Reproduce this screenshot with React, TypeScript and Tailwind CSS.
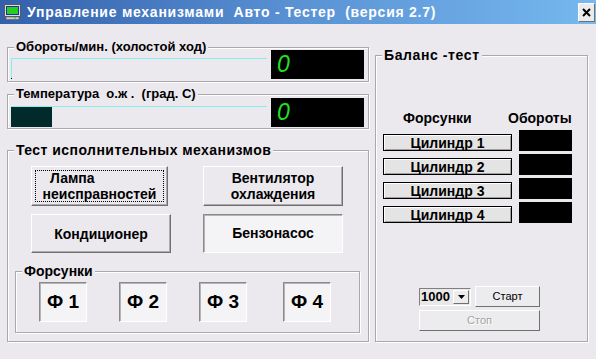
import React from 'react';

const BG = 'bg-[#ece9ee]';

function GroupBox({ label, labelClass = 'text-[14px]', className = '', children }: { label: string; labelClass?: string; className?: string; children?: React.ReactNode }) {
  return (
    <div className={`relative border border-[#a9a8ad] shadow-[inset_1px_1px_0_#fff,1px_1px_0_#fff] ${className}`}>
      <span className={`absolute -top-[9px] left-[6px] ${BG} px-[2px] font-bold leading-[16px] whitespace-pre text-black ${labelClass}`}>{label}</span>
      {children}
    </div>
  );
}

function RaisedButton({ className = '', children }: { className?: string; children: React.ReactNode }) {
  return (
    <div
      className={`relative flex flex-col items-center justify-center ${BG} border border-t-white border-l-white border-r-[#6f6f6f] border-b-[#6f6f6f] shadow-[inset_-1px_-1px_0_#acacac] text-[14px] font-bold leading-[16px] text-black ${className}`}
    >
      {children}
    </div>
  );
}

function PushedButton({ className = '', children }: { className?: string; children: React.ReactNode }) {
  return (
    <div
      className={`flex flex-col items-center justify-center bg-[#f4f3f5] border border-t-[#8a8a8a] border-l-[#8a8a8a] border-r-white border-b-white shadow-[inset_1px_1px_0_#b4b4b4] font-bold text-black ${className}`}
    >
      {children}
    </div>
  );
}

function Display() {
  return (
    <div className="w-[93px] h-[29px] bg-black flex items-center pl-[6px]">
      <span className="text-[23px] italic leading-none text-[#22e022]">0</span>
    </div>
  );
}

function AppIcon() {
  return (
    <svg width="17" height="16" viewBox="0 0 17 16">
      <rect x="0.5" y="0.5" width="16" height="12" fill="#dcdcdc" stroke="#5a5a5a" />
      <rect x="2" y="2" width="13" height="9" fill="#1834a8" />
      <rect x="3" y="3" width="11" height="7" fill="#22d022" />
      <rect x="2" y="13" width="13" height="2.5" fill="#d0d0d0" stroke="#5a5a5a" strokeWidth="0.6" />
      <rect x="10" y="13.5" width="2" height="1" fill="#22d022" />
    </svg>
  );
}

function CylinderRow({ n }: { n: number }) {
  return (
    <div className="flex items-end h-[21px]">
      <div className="w-[129px] h-[17px] border border-black bg-[#e4e4e4] shadow-[inset_1px_1px_0_#fff,inset_-1px_-1px_0_#a0a0a0] flex items-center justify-center text-[14px] font-bold leading-none">
        Цилиндр {n}
      </div>
      <div className="ml-[7px] w-[53px] h-[21px] bg-black" />
    </div>
  );
}

export default function App() {
  return (
    <div className={`w-[596px] h-[359px] overflow-hidden ${BG} text-black`} style={{ fontFamily: '"Liberation Sans", Arial, sans-serif' }}>
      {/* Title bar */}
      <div className="h-[24px] flex items-center bg-gradient-to-r from-[#3460ab] via-[#5a92d4] to-[#76b8ef] pl-[4px] pr-[1px]">
        <AppIcon />
        <span className="ml-[6px] text-[14px] font-bold text-white whitespace-pre tracking-[0.75px]">
          Управление механизмами  Авто - Тестер  (версия 2.7)
        </span>
        <div className="flex-1" />
        <div className="w-[17px] h-[19px] bg-[#ebebeb] border border-t-white border-l-white border-r-[#707070] border-b-[#707070] flex items-center justify-center">
          <svg width="9" height="9" viewBox="0 0 9 9">
            <path d="M1 1L8 8M8 1L1 8" stroke="#000" strokeWidth="2" />
          </svg>
        </div>
      </div>

      <div className="flex px-[7px] gap-[6px]">
        {/* Left column */}
        <div className="w-[362px] flex flex-col">
          <GroupBox label="Обороты/мин. (холостой ход)" labelClass="text-[13px]" className="mt-[23px] h-[35px] flex items-end gap-[4px] px-[3px] pb-[2px]">
            <div className="relative w-[256px] h-[21px] border-t border-l border-[#86ecec]">
              <div className="absolute left-[-1px] bottom-0 w-[1px] h-[1px] bg-black" />
            </div>
            <Display />
          </GroupBox>

          <GroupBox label="Температура  о.ж .  (град. С)" labelClass="text-[13px]" className="mt-[12px] h-[35px] flex items-end gap-[4px] px-[3px] pb-[1px]">
            <div className="w-[256px] h-[21px] border-t border-[#86ecec]">
              <div className="w-[41px] h-full bg-[#012a2a]" />
            </div>
            <Display />
          </GroupBox>

          <GroupBox label="Тест исполнительных механизмов" labelClass="text-[14px] tracking-[0.45px]" className="mt-[21px] h-[192px] pt-[15px]">
            <div className="grid grid-cols-[140px_140px] gap-x-[32px] gap-y-[8px] ml-[23px]">
              <RaisedButton className="w-[137px] h-[40px]">
                <div className="absolute inset-[3px] border border-dotted border-black" />
                <span className="self-start pl-[18px]">Лампа</span>
                <span>неисправностей</span>
              </RaisedButton>
              <RaisedButton className="w-[140px] h-[40px]">
                <span>Вентилятор</span>
                <span>охлаждения</span>
              </RaisedButton>
              <RaisedButton className="w-[140px] h-[39px]">Кондиционер</RaisedButton>
              <PushedButton className="w-[140px] h-[39px] text-[14px]">Бензонасос</PushedButton>
            </div>

            <GroupBox label="Форсунки" labelClass="text-[14px]" className="mt-[18px] ml-[7px] w-[345px] h-[62px] pt-[10px]">
              <div className="flex ml-[23px] gap-[32px]">
                <PushedButton className="w-[48px] h-[40px] text-[19px]">Ф 1</PushedButton>
                <PushedButton className="w-[48px] h-[40px] text-[19px]">Ф 2</PushedButton>
                <PushedButton className="w-[48px] h-[40px] text-[19px]">Ф 3</PushedButton>
                <PushedButton className="w-[48px] h-[40px] text-[19px] ml-[4px]">Ф 4</PushedButton>
              </div>
            </GroupBox>
          </GroupBox>
        </div>

        {/* Right column */}
        <GroupBox label="Баланс -тест" labelClass="text-[14px] tracking-[0.6px]" className="mt-[31px] w-[213px] h-[287px] pt-[54px] pl-[7px]">
          <div className="flex h-[16px] text-[14px] font-bold leading-[16px]">
            <span className="w-[125px] pl-[20px]">Форсунки</span>
            <span>Обороты</span>
          </div>
          <div className="mt-[4px] flex flex-col gap-[3px]">
            <CylinderRow n={1} />
            <CylinderRow n={2} />
            <CylinderRow n={3} />
            <CylinderRow n={4} />
          </div>
          <div className="ml-[36px] mt-[63px] flex items-center gap-[4px]">
            <div className="w-[52px] h-[18px] bg-[#e8e8e8] border border-t-[#808080] border-l-[#808080] border-r-white border-b-white flex items-center">
              <span className="text-[13px] font-bold leading-none pl-[1px]">1000</span>
              <div className="flex-1" />
              <div className="w-[16px] h-[14px] mr-[1px] bg-[#ececec] border border-t-white border-l-white border-r-[#707070] border-b-[#707070] flex items-center justify-center">
                <svg width="7" height="4" viewBox="0 0 7 4"><path d="M0 0H7L3.5 4Z" fill="#000" /></svg>
              </div>
            </div>
            <div className="w-[65px] h-[21px] bg-[#ececee] border border-t-white border-l-white border-r-[#707070] border-b-[#707070] flex items-center justify-center text-[11px] leading-none">
              Старт
            </div>
          </div>
          <div className="ml-[36px] mt-[3px] w-[121px] h-[21px] bg-[#ececee] border border-t-white border-l-white border-r-[#707070] border-b-[#707070] flex items-center justify-center text-[11px] leading-none text-[#a3a3a3] [text-shadow:1px_1px_0_#fff]">
            Стоп
          </div>
        </GroupBox>
      </div>
    </div>
  );
}
